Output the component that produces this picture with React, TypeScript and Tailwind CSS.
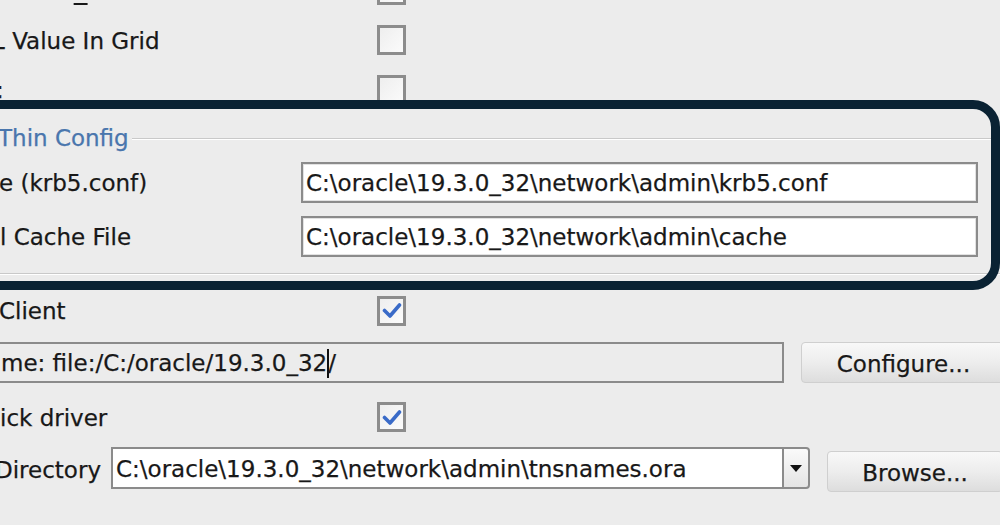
import React from 'react';

const Checkbox = ({ checked = false }: { checked?: boolean }) => (
  <div className="w-[29px] h-[30px] shrink-0 border-[3px] border-[#8c8c8c] bg-gradient-to-br from-[#eeeeee] to-[#fbfbfb] flex items-center justify-center">
    {checked && (
      <svg width="20" height="17" viewBox="0 0 20 17">
        <path d="M2.5 8.5 L8 14 L17.5 3" fill="none" stroke="#3a6bc8" strokeWidth="3.6" strokeLinecap="round" strokeLinejoin="round" />
      </svg>
    )}
  </div>
);

const CheckRow = ({ label, shift, checked, h = 'h-[50px]' }: { label: React.ReactNode; shift: string; checked?: boolean; h?: string }) => (
  <div className={`flex items-center ${h}`}>
    <div className="w-[377px] shrink-0 whitespace-nowrap pt-[2px]">
      <span className={`inline-block ${shift}`}>{label}</span>
    </div>
    <Checkbox checked={checked} />
  </div>
);

const TextBox = ({ value }: { value: string }) => (
  <div className="w-[677px] h-[41px] shrink-0 border-2 border-[#8b8b8b] bg-white flex items-center pl-[3px] pt-[2px] whitespace-nowrap overflow-hidden shadow-[inset_0_0_0_1px_#e2e2e2]">
    {value}
  </div>
);

const Button = ({ label, w }: { label: string; w: string }) => (
  <div className={`${w} h-[41px] shrink-0 rounded-[4px] border border-[#cfcfcf] bg-gradient-to-b from-[#f8f8f8] via-[#ededed] to-[#dddddd] flex items-center justify-center pt-[4px]`}>
    {label}
  </div>
);

export default function App() {
  return (
    <div className="relative w-[1000px] h-[525px] overflow-hidden bg-[#ececec] text-[#181818] text-[23px] leading-none font-['DejaVu_Sans',sans-serif] [-webkit-text-stroke:0.25px]">
      <div className="flex flex-col -mt-[35px]">
        <CheckRow label={<>Struct <span className="underline decoration-2 underline-offset-4">V</span>alue In Grid</>} shift="-ml-[3px]" />
        <CheckRow label="L Value In Grid" shift="-ml-[8px]" />
        <CheckRow label=":" shift="-ml-[4px]" h="h-[49px]" />

        {/* Kerberos fieldset */}
        <div className="flex items-center h-[48px]">
          <span className="-ml-[2px] text-[#4a76ad] whitespace-nowrap">Thin Config</span>
          <div className="flex-1 ml-[3px] mt-[2px] border-t border-[#c9c9c9] border-b border-b-white" />
        </div>
        <div className="flex items-center">
          <div className="w-[301px] shrink-0 whitespace-nowrap pt-[2px]">
            <span className="inline-block -ml-[1px]">e (krb5.conf)</span>
          </div>
          <TextBox value="C:\oracle\19.3.0_32\network\admin\krb5.conf" />
        </div>
        <div className="flex items-center mt-[13px]">
          <div className="w-[301px] shrink-0 whitespace-nowrap pt-[2px]">
            <span className="inline-block">l Cache File</span>
          </div>
          <TextBox value="C:\oracle\19.3.0_32\network\admin\cache" />
        </div>
        <div className="mt-[16px] mb-[10px] border-t border-[#c9c9c9] border-b border-b-white" />

        <CheckRow label="Client" shift="-ml-[1px]" checked h="h-[51px]" />

        <div className="flex items-center mt-[6px]">
          <div className="w-[788px] shrink-0 -ml-[4px] h-[41px] border-2 border-[#8b8b8b] bg-[#ececec] flex items-center pl-[3px] pt-[2px] whitespace-nowrap">
            me: file:/C:/oracle/19.3.0_32
            <span className="inline-block w-[2px] h-[29px] bg-[#111] -mr-[1px]" />
            /
          </div>
          <div className="ml-[17px]">
            <Button label="Configure..." w="w-[205px]" />
          </div>
        </div>

        <div className="mt-[9px]">
          <CheckRow label="ick driver" shift="ml-0" checked />
        </div>

        <div className="flex mt-[5px]">
          <div className="w-[111px] shrink-0 h-[42px] flex items-center whitespace-nowrap">
            <span className="inline-block -ml-[5px] mt-[5px]">Directory</span>
          </div>
          <div className="w-[699px] h-[42px] shrink-0 flex">
            <div className="flex-1 border-2 border-r-0 border-[#8b8b8b] bg-white flex items-center pl-[3px] pt-[2px] whitespace-nowrap overflow-hidden">
              C:\oracle\19.3.0_32\network\admin\tnsnames.ora
            </div>
            <div className="w-[28px] border-2 border-[#8b8b8b] rounded-r-[4px] bg-gradient-to-b from-[#fafafa] to-[#e4e4e4] flex items-center justify-center">
              <svg width="12" height="7" viewBox="0 0 12 7">
                <path d="M0 0 H12 L6 7 Z" fill="#111" />
              </svg>
            </div>
          </div>
          <div className="ml-[17px] mt-[4px]">
            <Button label="Browse..." w="w-[176px]" />
          </div>
        </div>
      </div>

      {/* annotation highlight drawn over the Kerberos section */}
      <div className="absolute left-[-30px] top-[100px] w-[1030px] h-[190px] border-[9px] border-[#0a2233] rounded-[27px] pointer-events-none" />
    </div>
  );
}
